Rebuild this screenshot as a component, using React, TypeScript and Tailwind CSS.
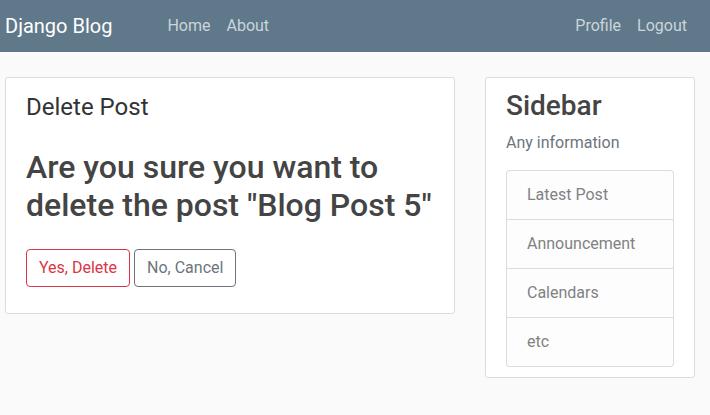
export default function App() {
  return (
    <div className="min-h-[415px] bg-[#fafafa] text-[#333] text-[16px] leading-[1.5]" style={{ fontFamily: 'Roboto, "Liberation Sans", sans-serif' }}>
      <header className="h-[52px] bg-[#5f788a] flex items-center pl-[5px] pr-[15px]">
        <span className="text-white text-[20px] leading-[30px]">Django Blog</span>
        <nav className="flex ml-[47px]">
          <a className="px-[8px] text-[#cbd5db]">Home</a>
          <a className="px-[8px] text-[#cbd5db]">About</a>
        </nav>
        <nav className="flex ml-auto">
          <a className="px-[8px] text-[#cbd5db]">Profile</a>
          <a className="px-[8px] text-[#cbd5db]">Logout</a>
        </nav>
      </header>
      <main className="flex items-start gap-[30px] px-[5px] pt-[25px]">
        <div className="w-[450px] bg-white border border-[#ddd] rounded-[3px] px-[20px] pt-[11px] pb-[10px]">
          <div className="text-[24px] leading-[36px] mb-[23px]">Delete Post</div>
          <h2 className="text-[32px] leading-[38.4px] font-medium text-[#444] mb-[24px]">
            Are you sure you want to delete the post "Blog Post 5"
          </h2>
          <div className="flex gap-[4px] mb-[16px]">
            <button className="border border-[#dc3545] text-[#dc3545] rounded-[4px] px-[12px] py-[6px] leading-[24px]">Yes, Delete</button>
            <button className="border border-[#6c757d] text-[#6c757d] rounded-[4px] px-[12px] py-[6px] leading-[24px]">No, Cancel</button>
          </div>
        </div>
        <div className="w-[210px] bg-white border border-[#ddd] rounded-[3px] px-[20px] pt-[11px] pb-[10px]">
          <h3 className="text-[28px] leading-[33.6px] font-medium text-[#444] mb-[8px]">Sidebar</h3>
          <p className="text-[#6c757d] mb-[15px]">Any information</p>
          <ul className="flex flex-col border border-[rgba(0,0,0,0.125)] rounded-[4px] bg-[#fdfdfe] text-[#818182]">
            <li className="px-[20px] py-[12px] border-b border-[rgba(0,0,0,0.125)]">Latest Post</li>
            <li className="px-[20px] py-[12px] border-b border-[rgba(0,0,0,0.125)]">Announcement</li>
            <li className="px-[20px] py-[12px] border-b border-[rgba(0,0,0,0.125)]">Calendars</li>
            <li className="px-[20px] py-[12px]">etc</li>
          </ul>
        </div>
      </main>
    </div>
  );
}
